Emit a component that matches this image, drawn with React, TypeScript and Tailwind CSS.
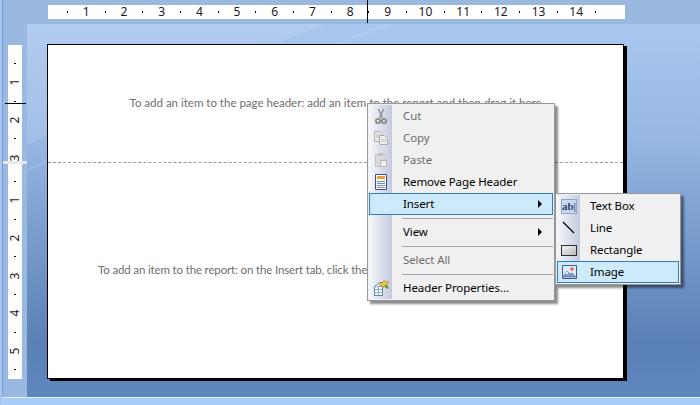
import React from 'react';

const font = "[font-family:'Noto_Sans',sans-serif]";

// ruler marks: a dot between every pair of numbers
function marks(from: number, to: number) {
  const out: string[] = [];
  for (let n = from; n <= to; n++) {
    out.push('.');
    out.push(String(n));
  }
  return out;
}

function HorizontalRuler() {
  return (
    <div className="ml-[46px] flex h-[14px] w-[577px] items-center bg-white pl-[10px]">
      {[...marks(1, 14), '.'].map((m, i) => (
        <div key={i} className="flex h-full w-[18.85px] items-center justify-center">
          {m === '.' ? (
            <div className="h-[2px] w-[1px] bg-black" />
          ) : (
            <span className="text-[12px] leading-none text-[#1a1a2a]">{m}</span>
          )}
        </div>
      ))}
    </div>
  );
}

function VerticalMarks({ items }: { items: string[] }) {
  return (
    <div className="flex flex-col items-center">
      {items.map((m, i) => (
        <div key={i} className="flex h-[18.85px] w-[14px] items-center justify-center">
          {m === '.' ? (
            <div className="h-[1px] w-[2px] bg-black" />
          ) : (
            <span className="-rotate-90 text-[12px] leading-none text-[#1a1a2a]">{m}</span>
          )}
        </div>
      ))}
    </div>
  );
}

function VerticalRuler() {
  return (
    <div className="ml-[6px] flex h-[334px] w-[14px] flex-col bg-white">
      <div className="h-[115px] pt-[9px]">
        <VerticalMarks items={['.', '1', '.', '2', '.', '3']} />
      </div>
      <div className="pt-[12px]">
        <VerticalMarks items={[...marks(1, 5), '.']} />
      </div>
    </div>
  );
}

function Scissors() {
  return (
    <svg width="16" height="17" viewBox="0 0 16 17" fill="none" stroke="#8c8c8c">
      <path d="M5.5 1 L9.5 10 M10.5 1 L6.5 10" strokeWidth="1.3" />
      <circle cx="5" cy="13" r="2.2" strokeWidth="1.8" />
      <circle cx="11" cy="13" r="2.2" strokeWidth="1.8" />
    </svg>
  );
}

function CopyIcon() {
  return (
    <svg width="16" height="16" viewBox="0 0 16 16">
      <path d="M1.5 1.5h6l2 2v8h-8z" fill="#e6e6e6" stroke="#b8b8b8" />
      <path d="M3 5h4M3 7h4" stroke="#c4c4c4" />
      <path d="M6.5 5.5h5l3 3v6h-8z" fill="#efefef" stroke="#adadad" />
      <path d="M8 9.5h5M8 11.5h5" stroke="#c4c4c4" />
    </svg>
  );
}

function PasteIcon() {
  return (
    <svg width="16" height="16" viewBox="0 0 16 16">
      <path d="M2.5 2.5h10v12h-10z" fill="#dcdcdc" stroke="#c2c2c2" />
      <path d="M5 1h5v3H5z" fill="#c4c4c4" />
      <path d="M7.5 8.5h6v6h-6z" fill="#f0f0f0" stroke="#b4b4b4" />
    </svg>
  );
}

function HeaderDocIcon() {
  return (
    <svg width="14" height="16" viewBox="0 0 14 16">
      <path d="M1.5 .5h11v15h-11z" fill="#fff" stroke="#33527f" />
      <path d="M3 2h8v3H3z" fill="#f0a030" />
      <path d="M3 7.5h8M3 9.5h8M3 11.5h8M3 13.5h8" stroke="#6f8fc0" />
    </svg>
  );
}

function PropertiesIcon() {
  return (
    <svg width="17" height="16" viewBox="0 0 17 16">
      <path d="M1.5 6.5l5-4h3v13h-8z" fill="#fff" stroke="#5a7fa8" />
      <path d="M9.5 6.5h-8M9.5 9.5h-8M9.5 12.5h-8M5.5 6.5v9" stroke="#8fb0d0" />
      <path d="M6 5l5-4 5 1-3 4-3 1z" fill="#f0c040" stroke="#a08020" strokeWidth=".6" />
      <path d="M11 6l3 3 2-1-2-3z" fill="#5a9a40" />
    </svg>
  );
}

function TextBoxIcon() {
  return (
    <div className="flex h-[15px] w-[16px] items-center justify-center border border-[#8fa6cc] bg-[#c9d8ee] font-['Liberation_Serif',serif] text-[11px] font-bold leading-none text-[#2a3f6a]">
      ab|
    </div>
  );
}

function LineIcon() {
  return (
    <svg width="16" height="16" viewBox="0 0 16 16">
      <path d="M2 2l11 11" stroke="#000" strokeWidth="1.2" />
    </svg>
  );
}

function RectIcon() {
  return <div className="h-[11px] w-[16px] border border-[#303030] bg-gradient-to-br from-[#f6f6f6] to-[#b8b8b8]" />;
}

function ImageIcon() {
  return (
    <svg width="15" height="14" viewBox="0 0 15 14">
      <path d="M.5 .5h14v13H.5z" fill="#dcecf8" stroke="#3d5f90" />
      <circle cx="10" cy="4" r="1.7" fill="#e8663a" />
      <path d="M1 12l4-6 3 3 2-1 4 4z" fill="#7f9dc8" stroke="#40608f" strokeWidth=".6" />
      <path d="M5 6l1.4 3H3.4z" fill="#fff" />
    </svg>
  );
}

type Row = {
  kind?: 'sep';
  label?: string;
  icon?: React.ReactNode;
  disabled?: boolean;
  active?: boolean;
  arrow?: boolean;
};

const mainItems: Row[] = [
  { label: 'Cut', icon: <Scissors />, disabled: true },
  { label: 'Copy', icon: <CopyIcon />, disabled: true },
  { label: 'Paste', icon: <PasteIcon />, disabled: true },
  { label: 'Remove Page Header', icon: <HeaderDocIcon /> },
  { label: 'Insert', active: true, arrow: true },
  { kind: 'sep' },
  { label: 'View', arrow: true },
  { kind: 'sep' },
  { label: 'Select All', disabled: true },
  { kind: 'sep' },
  { label: 'Header Properties...', icon: <PropertiesIcon /> },
];

const subItems: Row[] = [
  { label: 'Text Box', icon: <TextBoxIcon /> },
  { label: 'Line', icon: <LineIcon /> },
  { label: 'Rectangle', icon: <RectIcon /> },
  { label: 'Image', icon: <ImageIcon />, active: true },
];

function Menu({ items, gap, className }: { items: Row[]; gap: string; className: string }) {
  return (
    <div className={`absolute border border-[#979797] bg-[#f0f0f0] p-[1px] shadow-[3px_3px_2px_rgba(0,0,0,0.45)] ${className}`}>
      <div className="absolute bottom-[1px] left-[1px] top-[1px] w-[23px] bg-gradient-to-r from-[#f6f7fb] to-[#c4cade]" />
      <div className="relative flex flex-col">
        {items.map((it, i) =>
          it.kind === 'sep' ? (
            <div key={i} className="flex h-[6px] items-center pl-[33px]">
              <div className="h-[1px] flex-1 bg-[#a6a6b4]" />
            </div>
          ) : (
            <div
              key={i}
              className={`flex h-[22px] items-center border ${
                it.active ? 'border-[#2f7fb5] bg-[#cdeafa]' : 'border-transparent'
              }`}
            >
              <div className="flex h-full w-[22px] shrink-0 items-center justify-center">{it.icon}</div>
              <span
                className={`whitespace-nowrap text-[11.5px] leading-none tracking-[-0.1px] ${gap} ${
                  it.disabled ? 'text-[#6d6d6d]' : 'text-black'
                }`}
              >
                {it.label}
              </span>
              {it.arrow && (
                <div className="ml-auto mr-[10px] h-0 w-0 border-y-[4px] border-l-[4px] border-y-transparent border-l-black" />
              )}
            </div>
          )
        )}
      </div>
    </div>
  );
}

export default function App() {
  return (
    <div className={`relative flex h-[405px] w-[700px] flex-col overflow-hidden border-l-[2px] border-[#a8c6ee] bg-[#9ab9e0] shadow-[inset_1px_0_0_#6e9fe6] ${font}`}>
      <div className="pt-[5px]">
        <HorizontalRuler />
      </div>
      <div className="mt-[5px] flex min-h-0 flex-1">
        <div className="w-[25px] shrink-0 pt-[21px]">
          <VerticalRuler />
        </div>
        <div className="flex-1 bg-[linear-gradient(158deg,rgba(255,255,255,0.1)_0%,rgba(255,255,255,0.1)_18.6%,transparent_18.7%,transparent_22.3%,rgba(255,255,255,0.12)_22.5%,transparent_23%),linear-gradient(to_bottom,#a9c7ee_0%,#98b8e3_30%,#80a3d3_50%,#5a80b5_85%,#5f88bf_100%)] pl-[20px] pt-[20px]">
          <div className="flex h-[335px] w-[577px] flex-col border border-black bg-white shadow-[3px_2px_0_#000]">
            <div className="flex h-[118px] shrink-0 flex-col border-b border-dashed border-[#9a9a9a]">
              <p className="mt-[50px] whitespace-nowrap text-center font-['Lato',sans-serif] text-[11.5px] leading-[16px] text-[#6e6e6e]">
                To add an item to the page header: add an item to the report and then drag it here
              </p>
            </div>
            <p className="mt-[99px] whitespace-nowrap pl-[50px] font-['Lato',sans-serif] text-[11.5px] leading-[16px] tracking-[-0.15px] text-[#6e6e6e]">
              To add an item to the report: on the Insert tab, click the item and then click on the design surface.
            </p>
          </div>
        </div>
      </div>
      <div className="h-[8px] shrink-0 border-t border-[#e6f0ff] bg-[#a8cdfb]" />

      {/* ruler cursor lines */}
      <div className="absolute left-[365px] top-0 h-[23px] w-[1px] bg-black" />
      <div className="absolute left-[3px] top-[103px] h-[1px] w-[21px] bg-black" />
      <div className="absolute left-[1px] top-[161px] h-[3px] w-[24px] bg-[#e8e8ee]" />

      <Menu items={mainItems} gap="ml-[11px]" className="left-[365px] top-[103px] w-[188px]" />
      <Menu items={subItems} gap="ml-[10px]" className="left-[553px] top-[193px] w-[126px]" />
    </div>
  );
}
